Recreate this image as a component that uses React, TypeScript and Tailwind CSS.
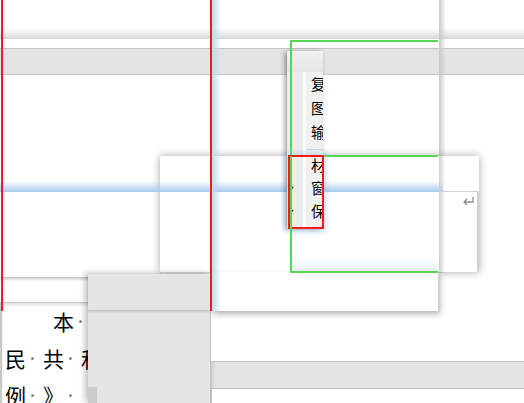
import React from 'react';

const cjk = { fontFamily: '"Noto Sans CJK SC", "Noto Sans", sans-serif' };

const menuItems = [
  { label: '复制', check: false },
  { label: '图片', check: false },
  { label: '输出', check: false },
  { label: '-', check: false },
  { label: '材质', check: false },
  { label: '窗口', check: true },
  { label: '保存', check: true },
];

const docLines = [
  { indent: 48, cells: ['本'] },
  { indent: 0, cells: ['民', '共', '和'] },
  { indent: 0, cells: ['例', '》'] },
];

const Dot = () => <span className="inline-block w-[3px] h-[3px] rounded-full bg-[#8a8a8a] ml-[5px] align-middle" />;

const ContextMenu = () => (
  <div className="absolute left-[287px] top-[51px] w-[36px] h-[177px] bg-[#f0f0f0] shadow-[-2px_1px_5px_rgba(0,0,0,0.4)] overflow-hidden z-30">
    <div className="h-[21px] bg-gradient-to-b from-[#f2f2f2] to-[#e4e4e4]" />
    <div className="flex h-[156px]">
      <div className="w-[16px] shrink-0 bg-[#ededed] flex flex-col">
        {menuItems.map((it, i) =>
          it.label === '-' ? (
            <div key={i} className="h-[10px]" />
          ) : (
            <div key={i} className={`${i < 3 ? 'h-[24px]' : 'h-[23px]'} flex items-center`}>
              {it.check && (
                <svg width="6" height="6" viewBox="0 0 6 6" className="ml-[1px]">
                  <path d="M0.5 5.5 L5 1" stroke="#222" strokeWidth="1.5" />
                </svg>
              )}
            </div>
          )
        )}
      </div>
      <div className="w-[3px] shrink-0 bg-[#fbfbfb]" />
      <div className="flex-1 min-w-0 flex flex-col" style={cjk}>
        {menuItems.map((it, i) =>
          it.label === '-' ? (
            <div key={i} className="h-[10px] flex items-center">
              <div className="h-px w-full bg-[#d6d6d6]" />
            </div>
          ) : (
            <div
              key={i}
              className={`${i < 3 ? 'h-[24px]' : 'h-[23px]'} pl-[5px] flex items-center whitespace-nowrap text-[15px] text-black`}
            >
              {it.label}
            </div>
          )
        )}
      </div>
    </div>
  </div>
);

export default function App() {
  return (
    <div className="relative w-[524px] h-[403px] overflow-hidden bg-white">
      {/* back window: title strip + toolbar band */}
      <div className="absolute left-0 top-[28px] w-full h-[11px] bg-gradient-to-b from-white to-[#d9d9d9]" />
      <div className="absolute left-0 top-[48px] w-full h-[27px] bg-[#e4e4e4] border-y border-[#c6c6c6]" />
      <div className="absolute left-[439px] top-0 w-[7px] h-[273px] bg-gradient-to-r from-[#c9c9c9] to-transparent" />

      {/* left window behind */}
      <div className="absolute left-0 top-[195px] w-[160px] h-[82px] bg-white shadow-[0_2px_3px_rgba(0,0,0,0.25)]" />

      {/* middle window */}
      <div className="absolute left-[160px] top-[156px] w-[319px] h-[116px] bg-white shadow-[0_0_8px_rgba(0,0,0,0.35)] z-10">
        <div className="absolute left-[283px] top-[35px] w-[36px] h-[81px] border-t border-r-2 border-[#cfcfcf] flex justify-end pr-[2px] pt-[4px]">
          <svg width="13" height="11" viewBox="0 0 13 11">
            <path d="M11 1 V6 H2 M5 3 L2 6 L5 9" fill="none" stroke="#8c8c8c" strokeWidth="1.3" />
          </svg>
        </div>
      </div>
      <div className="absolute left-0 top-[181px] w-[443px] h-[11px] bg-gradient-to-b from-transparent to-[#a6ccee] z-10" />
      <div className="absolute left-[439px] top-[156px] w-[6px] h-[116px] bg-gradient-to-r from-[#cfcfcf] to-transparent z-10" />
      <div className="absolute left-[292px] top-[258px] w-[146px] h-[14px] bg-gradient-to-b from-transparent to-[#e6f1fc] z-10" />

      {/* document page */}
      <div className="absolute left-0 top-[302px] w-[210px] h-[101px] bg-white border-t border-l-2 border-[#c8c8c8] shadow-[inset_0_2px_3px_rgba(0,0,0,0.12)]">
        <div className="pl-[3px] text-[21px] leading-[37px] text-black" style={cjk}>
          {docLines.map((ln, i) => (
            <div key={i} className="flex whitespace-nowrap" style={{ paddingLeft: ln.indent }}>
              {ln.cells.map((c, j) => (
                <span key={j} className="inline-flex items-center w-[38px]">
                  {c}
                  <Dot />
                </span>
              ))}
            </div>
          ))}
        </div>
      </div>

      {/* right lower panels */}
      <div className="absolute left-[210px] top-[311px] w-[314px] h-[92px] bg-white flex flex-col">
        <div className="h-[51px] border-l border-b border-[#c4c4c4]" />
        <div className="h-[26px] bg-[#e4e4e4] shadow-[inset_4px_0_4px_-2px_rgba(0,0,0,0.15)]" />
        <div className="flex-1 border-l-2 border-t border-[#c4c4c4]" />
      </div>

      {/* small white window */}
      <div className="absolute left-[211px] top-[272px] w-[227px] h-[39px] bg-white shadow-[2px_3px_6px_rgba(0,0,0,0.3)] z-10" />

      {/* gray side panel */}
      <div className="absolute left-[88px] top-[274px] w-[122px] h-[129px] bg-[#e5e5e5] shadow-[-3px_-1px_6px_rgba(0,0,0,0.25)] z-20 flex flex-col">
        <div className="h-[37px] border-b border-[#c2c2c2] shadow-[0_1px_2px_rgba(0,0,0,0.12)]" />
        <div className="flex-1 flex items-end">
          <div className="w-[9px] h-[16px] bg-[#cbcbcb]" />
        </div>
      </div>

      {/* selection guides */}
      <div className="absolute left-[290px] top-[40px] w-[148px] h-[233px] border-t-2 border-l-2 border-b-2 border-[#55d755] z-40" />
      <div className="absolute left-[290px] top-[155px] w-[148px] h-[2px] bg-[#55d755] z-40" />

      <ContextMenu />

      <div className="absolute left-[288px] top-[155px] w-[36px] h-[74px] border-2 border-[#ee1c1c] shadow-[0_0_6px_2px_rgba(130,185,240,0.45)] z-40" />
      <div className="absolute left-[290px] top-[156px] w-[2px] h-[117px] bg-[#55d755] z-40" />

      <div className="absolute left-[212px] top-0 w-[9px] h-[311px] bg-gradient-to-r from-[#b9dbf7] to-transparent z-40" />
      <div className="absolute left-[1px] top-0 w-[2px] h-[311px] bg-[#ee1c1c] z-50" />
      <div className="absolute left-[210px] top-0 w-[2px] h-[311px] bg-[#ee1c1c] z-50" />
    </div>
  );
}
